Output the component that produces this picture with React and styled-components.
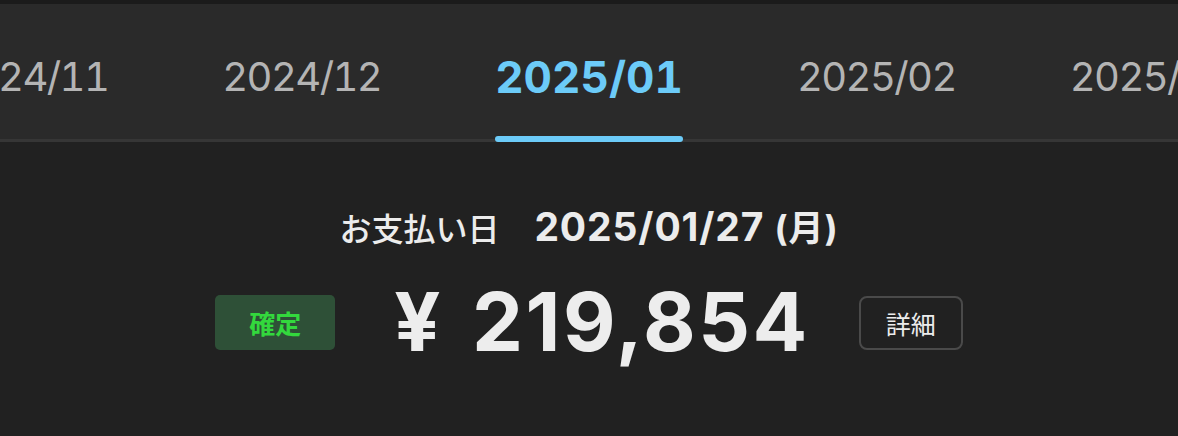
import React from "react";
import styled, { createGlobalStyle } from "styled-components";

const GlobalStyle = createGlobalStyle`
  html, body {
    margin: 0;
    padding: 0;
    background: #212121;
  }
  body {
    font-family: "Inter", "Noto Sans CJK JP", sans-serif;
    color: #ececec;
  }
`;

const months = ["2024/11", "2024/12", "2025/01", "2025/02", "2025/03"];
const activeMonth = "2025/01";

const App = () => {
    return (
        <Screen>
            <GlobalStyle />
            <StatusEdge />
            <TabBar>
                <TabStrip>
                    {months.map((m) => (
                        <Tab key={m}>
                            <TabLabel active={m === activeMonth}>{m}</TabLabel>
                        </Tab>
                    ))}
                </TabStrip>
            </TabBar>
            <Summary>
                <DateLine>
                    <DateLabel>お支払い日</DateLabel>
                    <DateValue>
                        2025/01/27 <Weekday>(月)</Weekday>
                    </DateValue>
                </DateLine>
                <AmountRow>
                    <StatusBadge>確定</StatusBadge>
                    <Amount>
                        <Yen>¥</Yen>219,854
                    </Amount>
                    <DetailButton>詳細</DetailButton>
                </AmountRow>
            </Summary>
        </Screen>
    );
};

export default App;

const Screen = styled.div`
    width: 100%;
    height: 436px;
    overflow: hidden;
    background: #212121;
`;

const StatusEdge = styled.div`
    height: 4px;
    background: #1b1b1b;
`;

const TabBar = styled.nav`
    height: 135px;
    background: #2a2a2a;
    border-bottom: 3px solid #363636;
`;

const TabStrip = styled.div`
    display: flex;
    justify-content: center;
    height: 100%;
`;

const Tab = styled.div`
    flex: 0 0 auto;
    display: flex;
    justify-content: center;
    height: 100%;
    padding: 0 57px;
`;

const TabLabel = styled.span`
    position: relative;
    height: 100%;
    display: flex;
    align-items: center;
    padding-top: 10px;
    box-sizing: border-box;
    white-space: nowrap;
    font-variant-numeric: tabular-nums;
    font-size: ${(p) => (p.active ? "44px" : "40px")};
    font-weight: ${(p) => (p.active ? 700 : 400)};
    color: ${(p) => (p.active ? "#6ccbf8" : "#b4b4b4")};
    letter-spacing: ${(p) => (p.active ? "0" : "-1.6px")};

    &::after {
        content: "";
        display: ${(p) => (p.active ? "block" : "none")};
        position: absolute;
        left: 0;
        right: 0;
        bottom: -3px;
        height: 6px;
        border-radius: 3px;
        background: #6ccbf8;
    }
`;

const Summary = styled.section`
    display: flex;
    flex-direction: column;
    align-items: center;
    padding-top: 58px;
`;

const DateLine = styled.div`
    display: flex;
    align-items: baseline;
    gap: 35px;
    height: 50px;
`;

const DateLabel = styled.span`
    font-size: 32px;
    font-weight: 500;
    color: #ececec;
`;

const DateValue = styled.span`
    font-size: 39px;
    font-weight: 700;
    color: #ececec;
    letter-spacing: 0.9px;
`;

const Weekday = styled.span`
    font-size: 35px;
    font-weight: 700;
`;

const AmountRow = styled.div`
    display: flex;
    align-items: center;
    margin-top: 32px;
`;

const StatusBadge = styled.div`
    width: 120px;
    height: 55px;
    display: flex;
    align-items: center;
    justify-content: center;
    background: #2e5037;
    border-radius: 5px;
    color: #33d83d;
    font-size: 26px;
    font-weight: 700;
`;

const Amount = styled.div`
    margin: 0 49px 0 59px;
    font-size: 81px;
    font-weight: 700;
    color: #ededed;
    line-height: 1;
    letter-spacing: 2.5px;
`;

const Yen = styled.span`
    margin-right: 29px;
`;

const DetailButton = styled.button`
    width: 104px;
    height: 54px;
    box-sizing: border-box;
    border: 2px solid #4a4a4a;
    border-radius: 8px;
    background: transparent;
    color: #ececec;
    font-family: "Noto Sans CJK JP", sans-serif;
    font-size: 25px;
    font-weight: 400;
    padding: 0;
`;
